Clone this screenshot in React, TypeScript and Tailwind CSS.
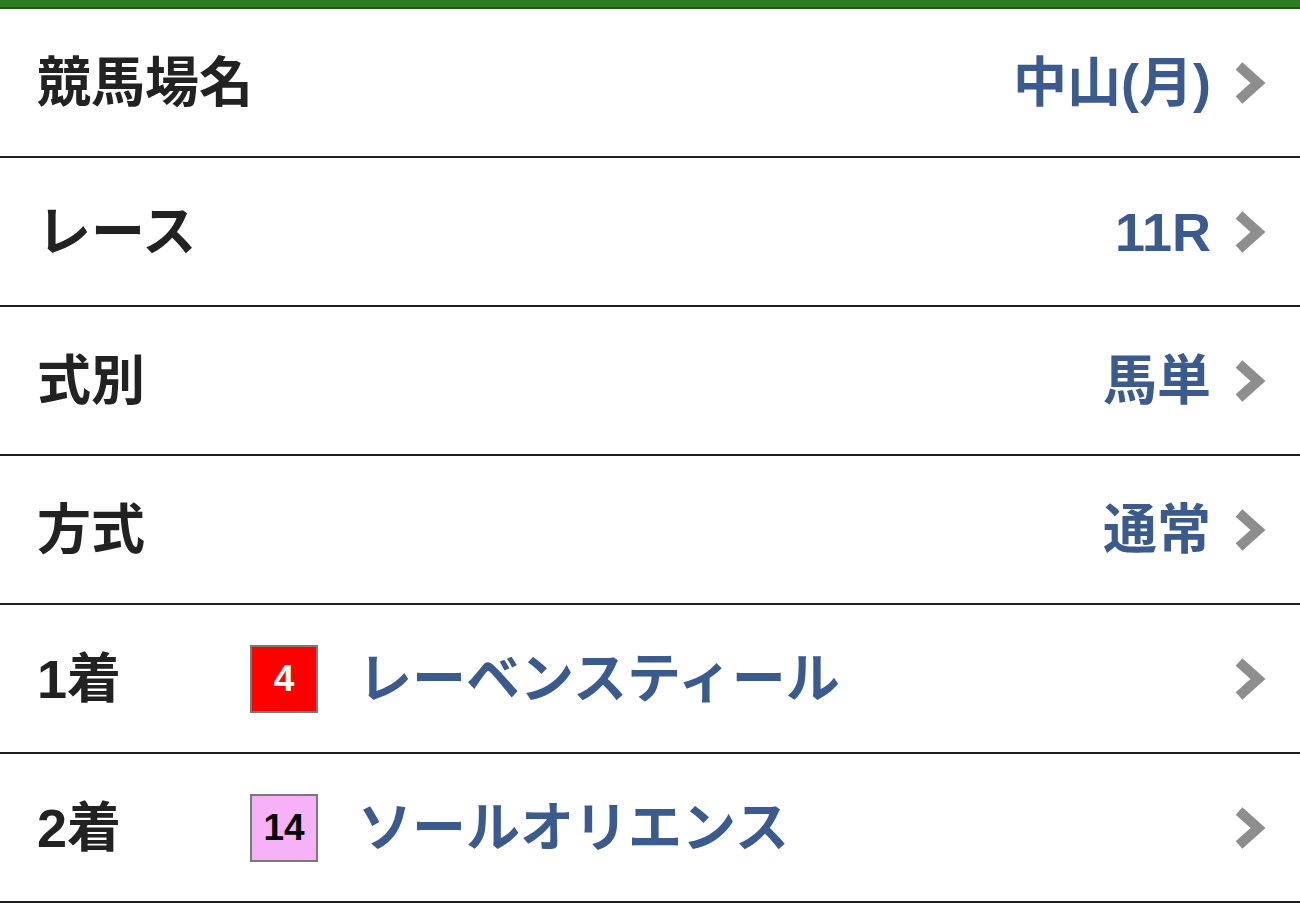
import React from 'react';

const Chevron: React.FC = () => (
  <svg width="32" height="44" viewBox="0 0 32 44" className="shrink-0">
    <polyline points="5,5 24,22 5,39" fill="none" stroke="#8e8e8e" strokeWidth="10" strokeLinejoin="miter" />
  </svg>
);

type Row = { label: string; value?: string; badge?: { num: string; bg: string; fg: string }; horse?: string };

const rows: Row[] = [
  { label: '競馬場名', value: '中山(月)' },
  { label: 'レース', value: '11R' },
  { label: '式別', value: '馬単' },
  { label: '方式', value: '通常' },
  { label: '1着', badge: { num: '4', bg: 'bg-[#ff0000]', fg: 'text-white' }, horse: 'レーベンスティール' },
  { label: '2着', badge: { num: '14', bg: 'bg-[#f6b1f7]', fg: 'text-black' }, horse: 'ソールオリエンス' },
];

const App: React.FC = () => {
  return (
    <div
      className="w-[1300px] h-[923px] bg-white overflow-hidden"
      style={{ fontFamily: '"Liberation Sans", "Noto Sans CJK JP", sans-serif' }}
    >
      {/* top bar */}
      <div className="h-[9px] bg-[#2f7d22] border-b-2 border-[#1e5a14]" />

      {rows.map((row) => (
        <div
          key={row.label}
          className="h-[149px] border-b-2 border-[#1f1f1f] flex items-center pl-[37px] pr-[34px]"
        >
          {row.badge ? (
            <>
              <div className="w-[213px] text-[54px] font-bold text-[#222] leading-none">{row.label}</div>
              <div
                className={`w-[68px] h-[68px] border-2 border-[#7a7a7a] flex items-center justify-center ${row.badge.bg}`}
              >
                <span className={`text-[37px] font-bold leading-none ${row.badge.fg}`}>{row.badge.num}</span>
              </div>
              <div className="ml-[40px] flex-1 text-[54px] font-bold text-[#3b5a8e] leading-none">{row.horse}</div>
              <Chevron />
            </>
          ) : (
            <>
              <div className="flex-1 text-[54px] font-bold text-[#222] leading-none">{row.label}</div>
              <div className="text-[54px] font-bold text-[#3b5a8e] leading-none mr-[23px]">{row.value}</div>
              <Chevron />
            </>
          )}
        </div>
      ))}
    </div>
  );
};

export default App;
